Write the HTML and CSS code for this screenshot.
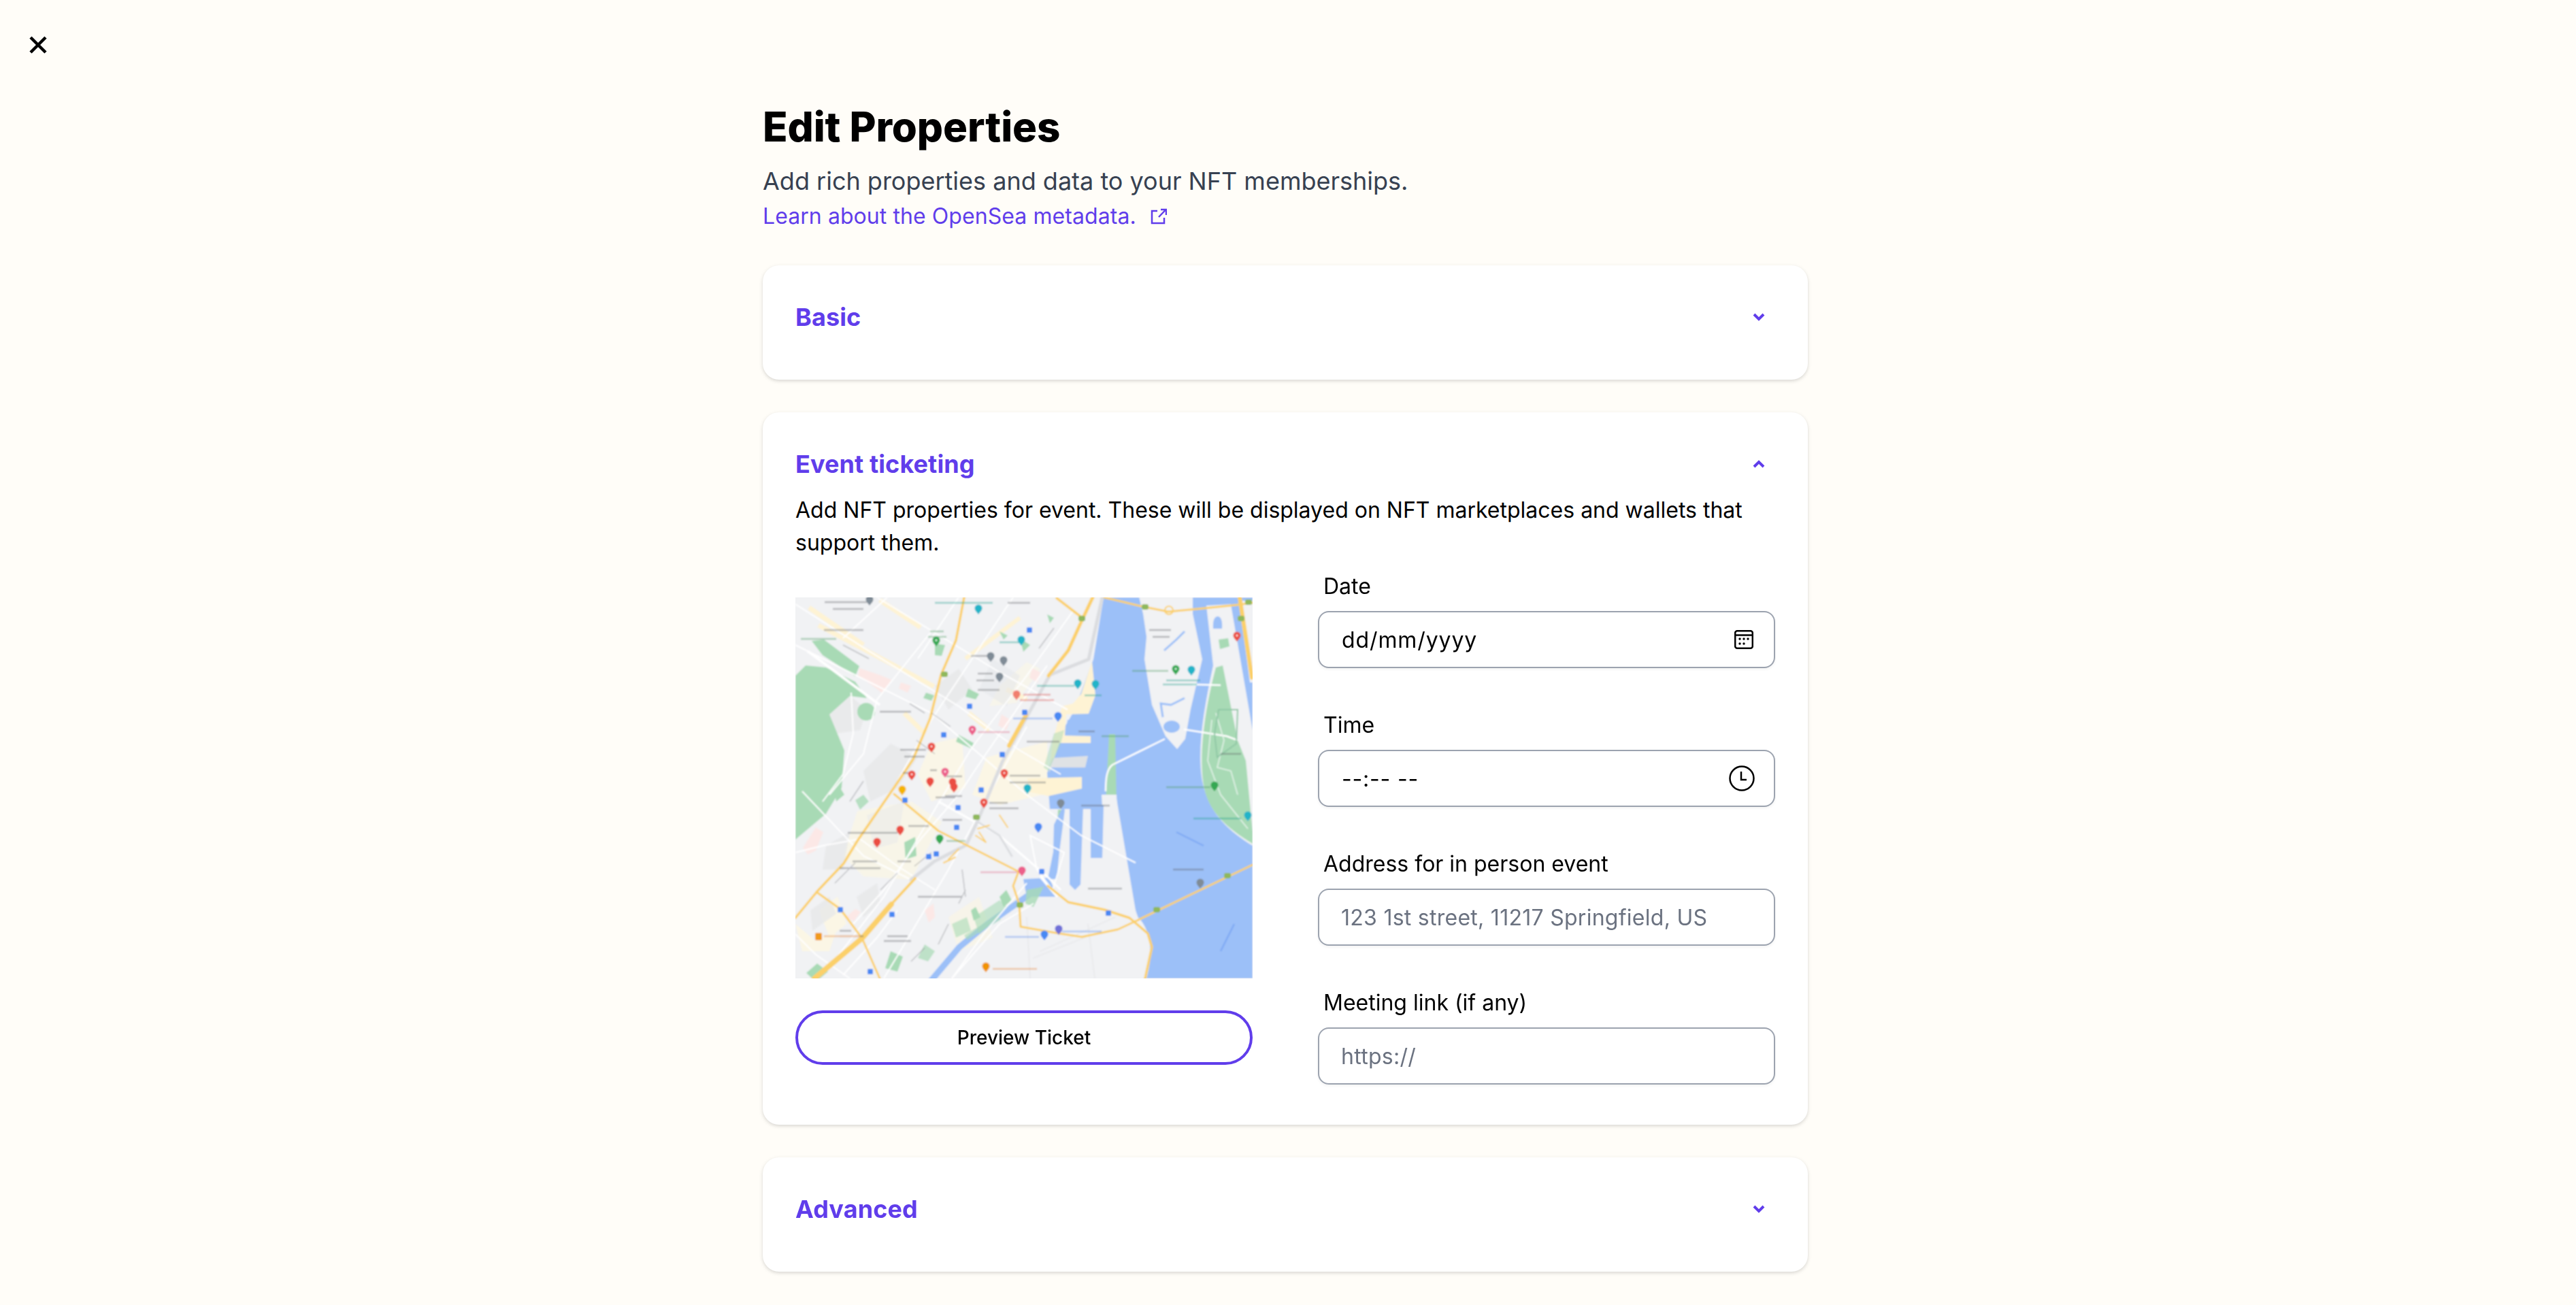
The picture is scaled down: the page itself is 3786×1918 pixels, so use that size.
FILE: index.html
```html
<!DOCTYPE html>
<html lang="en">
<head>
<meta charset="utf-8">
<title>Edit Properties</title>
<link rel="stylesheet" href="styles.css">
</head>
<body>
<div class="page">
  <div class="rail">
    <svg class="close" viewBox="0 0 26 26" aria-label="Close"><path d="M2 2 24 24M24 2 2 24"/></svg>
  </div>
  <main class="content">
    <h1 class="title">Edit Properties</h1>
    <p class="subtitle">Add rich properties and data to your NFT memberships.</p>
    <a class="learn" href="#">Learn about the OpenSea metadata.
      <svg class="ext" viewBox="0 0 24 24"><path d="M10 4H2v18h18v-8M12 13 22.500 2M15 2h8v8"/></svg>
    </a>

    <section class="card first">
      <div class="card-head">
        <h2 class="card-title">Basic</h2>
        <svg class="chev" viewBox="0 0 48 48"><path d="M17 20l7 7 7-7"/></svg>
      </div>
    </section>

    <section class="card">
      <div class="card-head">
        <h2 class="card-title">Event ticketing</h2>
        <svg class="chev" viewBox="0 0 48 48"><path d="M17 28l7-7 7 7"/></svg>
      </div>
      <p class="intro">Add NFT properties for event. These will be displayed on NFT marketplaces and wallets that support them.</p>
      <div class="ticket">
        <div class="preview">
          <svg class="map" viewBox="0 0 672 560" role="img" aria-label="Map">
            <defs>
              <filter id="soft" x="-2%" y="-2%" width="104%" height="104%"><feGaussianBlur stdDeviation="1"/></filter>
              <path id="pin" d="M0 0C-3 -4 -5.500 -6 -5.500 -9A5.500 5.500 0 1 1 5.500 -9C5.500 -6 3 -4 0 0Z"/>
              <rect id="bus" x="-4" y="-4" width="8" height="8" rx="1.500"/>
              <rect id="shield" x="-5" y="-4" width="10" height="8" rx="3"/>
            </defs>
            <g filter="url(#soft)">
              <rect x="-10" y="-10" width="692" height="580" fill="#f1f2f4"/>
              <!-- downtown blocks -->
              <g fill="#fef7e0" opacity=".75">
                <path d="M281 235 370 212 372 288 300 305 260 290Z"/>
                <path d="M91 314 171 300 215 330 170 415 100 410 70 380Z" opacity=".8"/>
                <path d="M225 470 270 440 290 500 240 520Z" opacity=".7"/>
                <path d="M35 460 62 440 75 480 50 500Z"/>
                <path d="M0 480 30 505 60 490 50 520 10 520Z"/>
                <path d="M200 215 245 205 250 280 200 300 180 260Z" opacity=".9"/>
                <path d="M300 130 340 95 360 105 325 155 285 160Z" opacity=".6"/>
              </g>
              <g fill="none" stroke="#fef3d4" stroke-width="7">
                <path d="M34 41 204 131M124 4 184 44M20 15 100 70"/>
                <path d="M250 90 290 60 330 30" stroke-width="6"/>
                <path d="M160 170 190 200M255 170 285 195M310 135 340 150"/>
              </g>
              <!-- grey building zones -->
              <g fill="#e6e7e9" opacity=".75">
                <path d="M100 255 140 215 180 235 150 280 110 300Z"/>
                <path d="M40 170 75 140 105 165 95 195 60 200Z"/>
                <path d="M45 365 80 345 70 400 40 400Z"/>
                <path d="M205 130 240 105 260 135 225 165Z"/>
                <path d="M22 460 50 440 60 465 25 490Z"/>
                <path d="M90 440 120 420 125 450 100 470Z"/>
                <path d="M290 90 330 115 310 160 270 135Z" opacity=".7"/>
                <path d="M105 320 160 300 150 360 115 370Z" opacity=".6"/>
              </g>
              <!-- pink zones -->
              <g fill="#fce8e6">
                <path d="M94 104 124 114 141 121 128 141 111 128 92 116Z"/>
                <path d="M155 125 170 130 165 140 152 134Z"/>
                <path d="M303 172 316 180 310 195 298 188Z"/>
                <path d="M11 368 30 338 41 345 30 372 18 378Z"/>
                <path d="M24 318 38 312 40 322 26 330Z"/>
                <path d="M74 470 88 458 96 462 86 476Z"/>
                <path d="M190 460 203 450 205 470 196 478Z"/>
                <path d="M348 104 360 110 356 125 344 118Z"/>
              </g>
              <!-- water -->
              <path fill="#9cc0f8" d="M453 0H672V560H516C530 510 515 480 504 471 485 420 478 370 471 311H374L370 258 388 214 396 190 409 168 438 91Z"/>
              <!-- piers and quays -->
              <path fill="#fef3d4" d="M436 94 441 144 431 171 398 172 396 203 434 204 434 214 388 214 373 258 378 212 392 160 408 156 420 142Z"/>
              <path fill="#fef3d4" d="M341 266 421 264 421 281 372 292 344 286Z"/>
              <path fill="#dfe2e5" d="M378 236 430 233 426 250 372 250Z"/>
              <path fill="#9cc0f8" d="M400 180 428 180 426 188 412 190 412 198 398 198Z"/>
              <path fill="#f1f2f4" d="M471 290 500 460 516 560H330L335 440 380 430 372 311 471 311Z"/>
              <path fill="#a8dab5" d="M461 201 470 201 472 300 456 300Z"/>
              <path fill="#f1f2f4" d="M450 290 472 290 474 330 452 330Z"/>
              <path fill="#a8dab5" d="M386 312 394 312 390 350 384 350Z"/>
              <!-- channels -->
              <g fill="#9cc0f8">
                <path d="M403 305H423L419 422 411 430 403 422Z"/>
                <path d="M434 305H453L451 383H434Z"/>
                <path d="M380 334 392 310 396 312 388 374 384 414 371 414 379 374Z"/>
                <path d="M335 414 373 412 385 440 340 440Z"/>
              </g>
              <path fill="none" stroke="#9cc0f8" stroke-width="9" d="M345 436 281 481 241 514 198 565"/>
              <path fill="none" stroke="#a8dab5" stroke-width="8" d="M300 470 250 500" opacity=".6"/>
              <!-- islands -->
              <path fill="#f1f2f4" d="M504 -5H584L584 24 598 91 581 164 573 208 561 223 544 204 524 158 513 91 516 58 511 24Z"/>
              <path fill="#f1f2f4" d="M604 12 640 10 672 195V365C640 345 608 320 598 270 590 225 600 165 614 100Z"/>
              <path fill="#f1f2f4" d="M652 5 680 5V125H668Z"/>
              <path fill="#a8dab5" d="M618 103 628 100 650 210 662 240 672 345V362C635 340 608 315 601 281 592 240 600 170 618 103Z"/>
              <path fill="#a8dab5" d="M622 62 636 60 638 72 624 76Z"/>
              <path fill="#9cc0f8" d="M614 46C613 30 618 28 621 28 625 28 628 34 627 46Z"/>
              <ellipse cx="553" cy="190" rx="12" ry="9" fill="#9cc0f8"/>
              <path fill="none" stroke="#9cc0f8" stroke-width="3" d="M572 148 552 158 537 156 540 176M572 50 560 62 542 78"/>
              <path fill="none" stroke="#fff" stroke-width="2.500" d="M543 208 466 246C458 252 456 265 456 285M571 194 634 204 650 210M584 128 625 129"/>
              <path fill="none" stroke="#e8f4ec" stroke-width="1.500" d="M618 170 630 210 620 250 640 255 650 290M612 180 606 240 625 290 665 340"/>
              <path fill="none" stroke="#8fc7a4" stroke-width="2" d="M622 165 650 165 648 215 620 235 616 200Z"/>
              <!-- parks -->
              <g fill="#a8dab5">
                <path d="M0 125V356L45 318 68 280 72 225 50 172 80 145 105 148 88 124 45 103 15 100 0 115Z"/>
                <path d="M24 64 42 62 94 101 88 116 40 85Z"/>
                <circle cx="104" cy="168" r="13"/>
                <path d="M58 288 66 280 72 290 60 300Z"/>
                <path d="M205 68 220 70 215 86 205 85Z"/>
                <path d="M254 134 270 142 265 150 250 146Z"/>
                <path d="M240 202 262 214 258 222 236 212Z"/>
                <path d="M160 360 176 352 178 380 162 385Z"/>
                <path d="M140 520 158 528 150 550 132 545Z"/>
                <path d="M16 552 32 538 48 550 30 565Z"/>
                <path d="M190 510 205 520 195 535 180 530Z" opacity=".7"/>
                <path d="M230 480 252 470 258 490 236 500Z" opacity=".6"/>
                <path d="M258 460 265 455 272 470 262 475Z"/>
                <path d="M300 440 310 430 318 445 306 455Z"/>
                <path d="M262 470 300 445 312 455 270 495Z" opacity=".6"/>
                <path d="M330 60 345 70 335 80Z"/>
                <path d="M370 25 380 30 374 38Z"/>
                <path d="M300 50 312 56 306 62Z"/>
                <path d="M380 200 395 195 390 215 372 255 365 250Z" opacity=".5"/>
                <path d="M340 430 365 425 350 455 338 450Z" opacity=".8"/>
                <path d="M192 140 204 144 200 152 188 148Z"/>
                <path d="M88 298 100 290 108 300 95 312Z" opacity=".8"/>
              </g>
              <!-- white roads -->
              <g fill="none" stroke="#fff" stroke-width="2">
                <path d="M0 70 200 170 340 290 420 350 500 390"/>
                <path d="M0 10 110 80 240 160 330 225 390 260"/>
                <path d="M120 0 300 110 400 165"/>
                <path d="M18 79 124 158" stroke-width="4"/>
                <path d="M0 375 40 365 95 355 150 395 205 430"/>
                <path d="M10 285 100 380 170 415"/>
                <path d="M230 560 280 490 340 420"/>
                <path d="M135 0 70 60M200 50 120 150 100 230 50 290"/>
                <path d="M320 0 260 90 200 180 150 270"/>
                <path d="M408 20 340 115 260 220 200 320 130 440 60 530"/>
                <path d="M370 100 280 230 240 290 180 360 130 430 85 480"/>
                <path d="M340 190 290 280 225 400 160 510 130 560"/>
                <path d="M240 0 200 60 180 90"/>
                <path d="M210 300 300 350 370 410 390 430" stroke-width="3"/>
                <path d="M0 495 30 525 80 560"/>
                <path d="M345 350 395 375 378 430 355 400Z"/>
                <path d="M150 460 120 500 70 555"/>
                <path d="M360 410 385 440" stroke-width="4"/>
                <path d="M350 450 300 480 230 560"/>
                <path d="M82 140 85 200 70 260 40 300"/>
              </g>
              <!-- rail -->
              <g fill="none" stroke="#dbdde0" stroke-linecap="round">
                <path stroke-width="5" d="M451 0 431 91 374 114 341 174 304 242 268 328 251 364 204 388 170 415"/>
                <path stroke-width="3" d="M268 330 300 350 318 380"/>
                <path stroke-width="1" stroke="#e3e4e6" d="M360 520 470 470M350 530 450 490M430 480 440 560M340 470 345 560"/>
              </g>
              <!-- highways -->
              <g fill="none" stroke="#fbd06b" stroke-linejoin="round" stroke-linecap="round">
                <path stroke-width="3.500" d="M248 0 236 63 214 114 198 178 173 238 144 281 91 358 71 391 33 431 0 471"/>
                <path stroke-width="3" d="M31 433 66 458 98 501 124 560"/>
                <path stroke-width="8" d="M28 560 98 501 141 451"/>
                <path stroke-width="4" d="M141 451 176 413"/>
                <path stroke-width="5" d="M437 0 421 34 401 78 372 115"/>
                <path stroke-width="6" d="M339 173 314 218"/>
                <path stroke-width="3" d="M145 289 210 343 328 403 320 424 329 451 331 484 388 494 421 499 474 488 504 474"/>
                <path stroke-width="3.500" d="M371 424 401 448 454 459 491 471 518 494 524 514 514 560"/>
                <path stroke-width="3" d="M504 474 672 393"/>
                <path stroke-width="3" d="M454 0 508 13 548 21 601 16 649 11 672 8"/>
                <circle cx="549" cy="19" r="6" stroke-width="2"/>
                <path stroke-width="6" d="M653 0 671 118"/>
                <path stroke-width="3.500" d="M384 1 419 28"/>
                <path stroke-width="2" d="M268 340 285 335M265 350 280 360 270 345M225 385 240 370M218 390 235 382"/>
                <path stroke-width="2" d="M300 320 312 338"/>
              </g>
              <!-- labels -->
              <g fill="none" stroke-width="2.500" opacity=".42">
                <path stroke="#5f6368" d="M43 7H105M55 17H100M42 48H100M124 168H170M154 224H192M160 234H190M158 258H172M220 292H245M222 263H245M198 254H208M315 262H360M315 272H368M285 302H312M285 310H328M166 336H196M216 327H245M77 346H150M150 388H170M84 388H120M65 398H125M180 440H245M65 490H82M65 498H100M130 505H170M135 498H165M420 306H462M555 400H600M430 428H480M520 48H552M525 58H550M340 212H388M312 8H345M258 86H288M268 112H290M266 122H292M268 136H300M416 197H440M625 230H655M206 294H235"/>
                <path stroke="#7a7d82" stroke-width="1.500" d="M70 70 108 90M168 156 190 170M178 210 205 230M200 170 228 190M58 420 88 390M125 430 150 405M175 395 200 375M240 450 250 430M210 510 225 480M170 535 190 515M380 45 358 75M245 400 250 440M100 270 80 300"/>
                <path stroke="#19a08c" d="M205 8H290M300 66H330M355 130H410M425 144H450M545 122H595M540 128H590M585 325H655"/>
                <path stroke="#4d9b60" d="M198 50H218M195 58H222M8 61H60M495 108H548M450 204H490M545 279H610M222 358H250"/>
                <path stroke="#d9534f" d="M335 143H375M330 151H380"/>
                <path stroke="#e0708c" d="M268 198H315M272 404H326"/>
                <path stroke="#5b8def" d="M320 178H378M308 499H358M392 491H450M560 345 600 365M645 480 625 520"/>
                <path stroke="#e8893a" d="M42 498H95M290 546H355"/>
              </g>
              <!-- pins -->
              <g fill="#eb4d42">
                <use href="#pin" x="200" y="228"/><use href="#pin" x="171" y="269"/><use href="#pin" x="198" y="279"/><use href="#pin" x="231" y="280"/><use href="#pin" x="233" y="287"/><use href="#pin" x="307" y="267"/><use href="#pin" x="277" y="310"/><use href="#pin" x="154" y="350"/><use href="#pin" x="120" y="368"/><use href="#pin" x="649" y="65"/><use href="#pin" x="325" y="151" opacity=".7"/>
              </g>
              <g fill="#ec5f8a"><use href="#pin" x="260" y="203"/><use href="#pin" x="220" y="265"/><use href="#pin" x="333" y="410"/></g>
              <g fill="#7f8b96"><use href="#pin" x="109" y="12"/><use href="#pin" x="287" y="95"/><use href="#pin" x="306" y="101"/><use href="#pin" x="300" y="125"/><use href="#pin" x="390" y="311"/><use href="#pin" x="595" y="428"/></g>
              <g fill="#23b4c8"><use href="#pin" x="269" y="25"/><use href="#pin" x="332" y="71"/><use href="#pin" x="415" y="135"/><use href="#pin" x="441" y="136"/><use href="#pin" x="341" y="289"/><use href="#pin" x="582" y="115"/><use href="#pin" x="665" y="329"/></g>
              <g fill="#34a853"><use href="#pin" x="207" y="72"/><use href="#pin" x="559" y="114"/><use href="#pin" x="616" y="285"/><use href="#pin" x="212" y="363"/></g>
              <g fill="#4a89f3"><use href="#pin" x="386" y="183"/><use href="#pin" x="357" y="346"/><use href="#pin" x="366" y="504"/></g>
              <use href="#pin" x="387" y="496" fill="#6f6fd8"/>
              <use href="#pin" x="157" y="291" fill="#f5b400"/>
              <use href="#pin" x="280" y="551" fill="#f09300"/>
              <rect x="29" y="493" width="10" height="11" rx="2" fill="#f09a1a"/>
              <g fill="#4a89f3">
                <use href="#bus" x="344" y="48"/><use href="#bus" x="256" y="160"/><use href="#bus" x="337" y="169"/><use href="#bus" x="218" y="202"/><use href="#bus" x="304" y="231"/><use href="#bus" x="273" y="283"/><use href="#bus" x="161" y="298"/><use href="#bus" x="239" y="309"/><use href="#bus" x="237" y="338"/><use href="#bus" x="196" y="381"/><use href="#bus" x="207" y="377"/><use href="#bus" x="362" y="403"/><use href="#bus" x="66" y="459"/><use href="#bus" x="142" y="466"/><use href="#bus" x="460" y="464"/><use href="#bus" x="110" y="550"/>
              </g>
              <g fill="#8fb85c">
                <use href="#shield" x="219" y="113"/><use href="#shield" x="421" y="31"/><use href="#shield" x="514" y="14"/><use href="#shield" x="655" y="31"/><use href="#shield" x="666" y="7"/><use href="#shield" x="266" y="323"/><use href="#shield" x="330" y="452"/><use href="#shield" x="531" y="459"/><use href="#shield" x="635" y="409"/>
              </g>
              <g fill="#fff" opacity=".85">
                <circle cx="200" cy="219" r="1.500"/><circle cx="171" cy="260" r="1.500"/><circle cx="649" cy="56" r="1.500"/><circle cx="207" cy="63" r="1.500"/><circle cx="559" cy="105" r="1.500"/><circle cx="220" cy="256" r="1.500"/><circle cx="260" cy="194" r="1.500"/><circle cx="307" cy="258" r="1.500"/><circle cx="277" cy="301" r="1.500"/>
              </g>
            </g>
          </svg>
          <button class="preview-btn" type="button">Preview Ticket</button>
        </div>
        <form class="fields">
          <label class="field">
            <span class="field-label">Date</span>
            <span class="input-wrap">
              <input class="input date" type="text" value="dd/mm/yyyy">
              <svg class="icon-cal" viewBox="0 0 28 28"><rect x="1.200" y="1.200" width="25.600" height="25.600" rx="3" class="line"/><path d="M1.500 7.500h25" class="line"/><g class="dots"><circle cx="8" cy="13" r="1.700"/><circle cx="14" cy="13" r="1.700"/><circle cx="20" cy="13" r="1.700"/><circle cx="8" cy="20" r="1.700"/><circle cx="14" cy="20" r="1.700"/></g></svg>
            </span>
          </label>
          <label class="field">
            <span class="field-label">Time</span>
            <span class="input-wrap">
              <input class="input time" type="text" value="--:-- --">
              <svg class="icon-clock" viewBox="0 0 38 38"><circle cx="19" cy="19" r="17.500" class="line"/><path d="M18 9v12h8" class="line"/></svg>
            </span>
          </label>
          <label class="field">
            <span class="field-label">Address for in person event</span>
            <span class="input-wrap">
              <input class="input" type="text" placeholder="123 1st street, 11217 Springfield, US">
            </span>
          </label>
          <label class="field">
            <span class="field-label">Meeting link (if any)</span>
            <span class="input-wrap">
              <input class="input" type="text" placeholder="https://">
            </span>
          </label>
        </form>
      </div>
    </section>

    <section class="card">
      <div class="card-head">
        <h2 class="card-title">Advanced</h2>
        <svg class="chev" viewBox="0 0 48 48"><path d="M17 20l7 7 7-7"/></svg>
      </div>
    </section>
  </main>
</div>
</body>
</html>
```
FILE: styles.css
```css
* { box-sizing: border-box; }
html, body { margin: 0; height: 100%; }
body {
  background: #fffdf8;
  color: #000;
  font-family: Inter, "Liberation Sans", sans-serif;
  overflow: hidden;
}
.page {
  display: grid;
  grid-template-columns: 1121px 1536px 1fr;
}
.rail { padding: 53px 0 0 43px; }
.close { display: block; width: 26px; height: 26px; }
.close path { fill: none; stroke: #000; stroke-width: 4.500; }

.content { padding-top: 146px; }
.title { margin: 0; font-size: 60px; line-height: 80px; font-weight: 800; letter-spacing: -.1px; }
.subtitle { margin: 12px 0 0; font-size: 36px; line-height: 56px; color: #374151; font-weight: 400; }
.learn {
  display: flex;
  align-items: center;
  gap: 21px;
  margin-top: 0;
  font-size: 32px;
  line-height: 48px;
  letter-spacing: .07px;
  color: #603deb;
  text-decoration: none;
}
.ext { width: 24px; height: 24px; }
.ext path { fill: none; stroke: #603deb; stroke-width: 2.500; }

.card {
  margin-top: 48px;
  padding: 48px;
  background: #fff;
  border-radius: 24px;
  box-shadow: 0 2px 6px rgba(0,0,0,.1), 0 2px 4px rgba(0,0,0,.06);
}
.first { margin-top: 48px; }
.card-head {
  display: flex;
  align-items: center;
  justify-content: space-between;
  height: 56px;
  margin-bottom: 16px;
}
.card-title { margin: 0; font-size: 36px; line-height: 56px; font-weight: 700; letter-spacing: .1px; color: #603deb; }
.chev { width: 48px; height: 48px; }
.chev path { fill: none; stroke: #603deb; stroke-width: 4; }

.intro { margin: 0; font-size: 32px; line-height: 48px; }
.ticket {
  display: grid;
  grid-template-columns: 672px 672px;
  gap: 96px;
  margin-top: 8px;
  padding-bottom: 11px;
}
.preview { padding-top: 48px; }
.map { display: block; width: 672px; height: 560px; }
.preview-btn {
  display: block;
  width: 672px;
  height: 80px;
  margin-top: 47px;
  background: #fff;
  border: 4px solid #603deb;
  border-radius: 40px;
  color: #000;
  font: 500 28px/40px Inter, "Liberation Sans", sans-serif;
}

.fields { display: flex; flex-direction: column; gap: 60px; padding-top: 8px; }
.field { display: flex; flex-direction: column; }
.field-label { padding-left: 8px; font-size: 32px; line-height: 48px; margin-bottom: 12px; }
.input-wrap { position: relative; display: block; }
.input {
  display: block;
  width: 100%;
  height: 84px;
  padding: 0 32px;
  background: #fff;
  border: 2px solid #9ca3af;
  border-radius: 16px;
  box-shadow: 0 2px 4px rgba(0,0,0,.05);
  font: 400 32px/48px Inter, "Liberation Sans", sans-serif;
  color: #000;
  outline: none;
}
.input::placeholder { color: #6b7280; opacity: 1; letter-spacing: .27px; }
.date { padding-left: 33px; letter-spacing: .9px; }
.time { padding-left: 33px; letter-spacing: .8px; }
.line { fill: none; stroke: #000; stroke-width: 2.500; }
.dots { fill: #000; }
.icon-cal { position: absolute; right: 32px; top: 28px; width: 28px; height: 28px; }
.icon-clock { position: absolute; right: 30px; top: 23px; width: 38px; height: 38px; }
```
